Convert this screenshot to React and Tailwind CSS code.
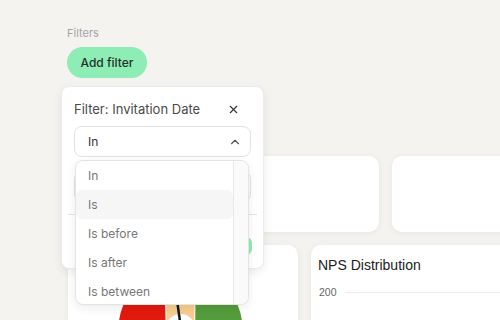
import { X, ChevronUp } from 'lucide-react';

const options = ['In', 'Is', 'Is before', 'Is after', 'Is between'];

function Gauge() {
  // card coords: hub sits just below the visible area
  return (
    <svg width="230" height="100" viewBox="0 0 230 100" className="absolute left-0 top-0">
      <defs>
        <clipPath id="dial">
          <circle cx="112.5" cy="84" r="62" />
        </clipPath>
      </defs>
      <g clipPath="url(#dial)">
        <polygon points="0,0 96,0 98,100 0,100" fill="#e11a0d" />
        <polygon points="97,0 127,0 126,100 99,100" fill="#f6cd8e" />
        <polygon points="128,0 230,0 230,100 127,100" fill="#549c3b" />
      </g>
      <circle cx="112.5" cy="84" r="15" fill="#fff" />
      <line x1="112.5" y1="80" x2="109" y2="55" stroke="#151515" strokeWidth="2.5" />
    </svg>
  );
}

export default function App() {
  return (
    <div className="relative h-[320px] w-[500px] overflow-hidden bg-[#f5f3ef] font-['Inter',sans-serif]">
      <div className="pl-[67px] pt-[27px]">
        <div className="text-[11px] leading-[13px] text-[#a3a3ad]">Filters</div>
        <button className="mt-[7px] h-[31px] w-[80px] rounded-full bg-[#8eecb5] text-[12px] font-medium text-[#1f3328]">
          Add filter
        </button>
      </div>

      <div className="ml-[68px] mt-[78px] flex flex-col gap-[13px]">
        <div className="flex gap-[13px]">
          <div className="h-[76px] w-[311px] shrink-0 rounded-[10px] bg-white shadow-[0_1px_6px_rgba(60,50,30,0.07)]" />
          <div className="h-[76px] w-[200px] shrink-0 rounded-[10px] bg-white shadow-[0_1px_6px_rgba(60,50,30,0.07)]" />
        </div>
        <div className="flex gap-[13px]">
          <div className="relative h-[100px] w-[230px] shrink-0 rounded-[10px] bg-white shadow-[0_1px_6px_rgba(60,50,30,0.07)]">
            <Gauge />
          </div>
          <div className="h-[100px] w-[250px] shrink-0 rounded-[10px] bg-white pl-[7px] pt-[12px] font-['Liberation_Sans',sans-serif] shadow-[0_1px_6px_rgba(60,50,30,0.07)]">
            <div className="text-[14px] leading-[16px] text-[#222]">NPS Distribution</div>
            <div className="mt-[12px] flex items-center gap-[8px]">
              <span className="pl-[1px] text-[10.5px] text-[#666]">200</span>
              <div className="h-px flex-1 bg-[#ececec]" />
            </div>
          </div>
        </div>
      </div>

      <div className="absolute left-[61px] top-[86px] flex h-[183px] w-[203px] flex-col rounded-[8px] border border-[#ececec] bg-white px-[12px] pt-[14px] shadow-[0_3px_10px_rgba(0,0,0,0.08)]">
        <div className="flex items-center justify-between pr-[11px]">
          <span className="text-[13px] leading-[16px] text-[#4a4a4a]">Filter: Invitation Date</span>
          <X size={13} strokeWidth={2} className="text-[#333]" />
        </div>
        <div className="mt-[9px] flex h-[31px] items-center justify-between rounded-[8px] border border-[#e2e2e2] pl-[13px] pr-[8px]">
          <span className="text-[12px] text-[#333]">In</span>
          <ChevronUp size={14} strokeWidth={2} className="text-[#555]" />
        </div>
        <div className="mt-[14px] h-[31px] rounded-[8px] border border-[#e2e2e2]" />
        <div className="-mx-[6px] mt-[12px] h-px bg-[#e2e2ee]" />
        <div className="mt-[22px] flex justify-end">
          <div className="-mr-[1px] h-[18px] w-[60px] rounded-[6px] bg-[#8eecb5]" />
        </div>
      </div>

      <div className="absolute left-[75px] top-[160px] flex h-[145px] w-[174px] overflow-hidden rounded-[8px] border border-[#e4e4e4] bg-white shadow-[0_3px_10px_rgba(0,0,0,0.08)]">
        <div className="flex flex-1 flex-col">
          {options.map((o) => (
            <div
              key={o}
              className={
                o === 'Is'
                  ? 'flex h-[29px] shrink-0 items-center rounded-[6px] bg-[#f6f6f6] pl-[12px] text-[12px] text-[#777]'
                  : 'flex h-[29px] shrink-0 items-center pl-[12px] text-[12px] text-[#777]'
              }
            >
              {o}
            </div>
          ))}
        </div>
        <div className="w-[15px] border-l border-[#e8e8e8] bg-[#fafafa]" />
      </div>
    </div>
  );
}
